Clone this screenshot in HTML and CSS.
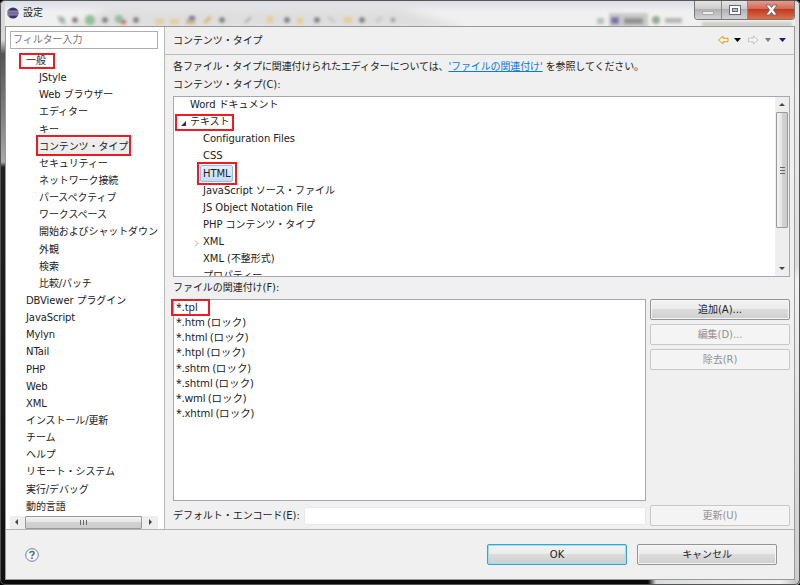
FILE: index.html
```html
<!DOCTYPE html>
<html lang="ja">
<head>
	<meta charset="UTF-8">
	<title>設定</title>
	<link rel="stylesheet" href="styles.css">
</head>
<body>
<div class="window">
	<div class="titlebar">
		<svg class="glass" width="800" height="26" viewBox="0 0 800 26">
			<defs>
				<filter id="soft" x="-50%" y="-50%" width="200%" height="200%"><feGaussianBlur stdDeviation="1.7"/></filter>
				<filter id="haze"><feGaussianBlur stdDeviation="4"/></filter>
			</defs>
			<path d="M60 30L110 8H400L470 30z" fill="#d4d4d4" opacity=".65" filter="url(#haze)"/>
			<g filter="url(#soft)">
				<g fill="#7b7b7b">
					<circle cx="75" cy="20" r="2.8"/><circle cx="105" cy="20" r="2.8"/><circle cx="136" cy="20" r="2.8"/><circle cx="222" cy="20" r="2.8"/>
					<circle cx="287" cy="20" r="2.8"/><circle cx="317" cy="20" r="2.8"/><circle cx="362" cy="20" r="2.8"/><circle cx="393" cy="20" r="2.4" opacity=".6"/>
				</g>
				<path d="M57 16l7 1 2 7-6-1z" fill="#a1b7ae"/>
				<circle cx="90" cy="20" r="5" fill="#8fc09a"/>
				<circle cx="119" cy="19" r="4" fill="#8fc09a"/><rect x="121" y="20" width="5" height="4" fill="#c36f6b"/>
				<path d="M155 19h9v5h-9zM170 19h9v5h-9z" fill="#e5cd9e"/>
				<path d="M186 19h9v5h-9z" fill="#c9b486"/><path d="M189 16h6v4h-6z" fill="#6e799c"/>
				<path d="M203 22l6-6 3 2-6 6z" fill="#dbb778"/>
				<path d="M245 23l6-6" stroke="#aaa" stroke-width="2"/>
				<path d="M267 16h6v7h-6zM297 18h6v6h-6zM344 17h8v6h-8z" fill="#e9ce96"/>
				<path d="M328 17l7 5M376 22l6-5" stroke="#c9c9c9" stroke-width="3"/>
				<rect x="609" y="13" width="39" height="14" fill="#c9c9c9"/>
				<rect x="597" y="18" width="7" height="6" fill="#b5c1c0"/>
				<rect x="611" y="17" width="8" height="7" fill="#7772a8"/>
				<path d="M624 18h19v6h-19z" fill="#929292"/>
				<circle cx="656" cy="20" r="4" fill="#8eab98"/>
				<path d="M665 18h17v5h-17z" fill="#b5b5b5"/>
				<path d="M702 22h90v5h-90z" fill="#d0ccc8"/>
			</g>
		</svg>
		<svg class="logo" width="12" height="12" viewBox="0 0 12 12">
			<circle cx="6" cy="6" r="5.6" fill="#3b326f"/>
			<path d="M.8 4.2h10.8M.5 6h11.3M.9 7.9h10.7" stroke="#c6c4e1" stroke-width=".8"/>
			<path d="M2.5 1.6A5.6 5.6 0 0 0 2.5 10.4" fill="none" stroke="#ba9a9e"/>
		</svg>
		<span class="caption">設定</span>
		<div class="controls">
			<div class="control min"><svg width="12" height="5"><rect x=".5" y=".5" width="11" height="3" fill="#eee" stroke="#aaa"/></svg></div>
			<div class="control max"><svg width="14" height="12"><rect x="1.5" y="1.5" width="11" height="9" fill="#fff" stroke="#666875"/><rect x="4.5" y="4.5" width="5" height="3" fill="#bbb" stroke="#666875"/></svg></div>
			<div class="control close"><svg width="13" height="12" viewBox="0 0 13 12"><path d="M1 1h3.5l2 2.5 2-2.5H12L8.5 6l3.5 5H8.5l-2-2.7L4.5 11H1l3.5-5z" fill="#fff" stroke="#665863" stroke-width=".8"/></svg></div>
		</div>
	</div>

	<div class="client">
		<div class="main">
			<div class="sidebar">
				<div class="filter">フィルター入力</div>
				<ul class="tree nav">
					<li>一般</li>
					<li class="sub">JStyle</li>
					<li class="sub">Web ブラウザー</li>
					<li class="sub">エディター</li>
					<li class="sub">キー</li>
					<li class="sub"><span class="current">コンテンツ・タイプ</span></li>
					<li class="sub">セキュリティー</li>
					<li class="sub">ネットワーク接続</li>
					<li class="sub">パースペクティブ</li>
					<li class="sub">ワークスペース</li>
					<li class="sub">開始およびシャットダウン</li>
					<li class="sub">外観</li>
					<li class="sub">検索</li>
					<li class="sub">比較/パッチ</li>
					<li>DBViewer プラグイン</li>
					<li>JavaScript</li>
					<li>Mylyn</li>
					<li>NTail</li>
					<li>PHP</li>
					<li>Web</li>
					<li>XML</li>
					<li>インストール/更新</li>
					<li>チーム</li>
					<li>ヘルプ</li>
					<li>リモート・システム</li>
					<li>実行/デバッグ</li>
					<li>動的言語</li>
				</ul>
				<div class="hscroll">
					<svg width="15" height="12"><path d="M8 3v6L5 6z" fill="#444"/></svg>
					<div class="hthumb"><i></i><i></i><i></i></div>
					<svg width="16" height="12"><path d="M7 3v6l3-3z" fill="#444"/></svg>
				</div>
			</div>

			<div class="page">
				<div class="heading">
					<h1>コンテンツ・タイプ</h1>
					<svg width="74" height="12" viewBox="0 0 74 12">
						<path d="M.5 5l4.5-4v2.2h5v3.600h-5V9z" fill="#fff5c9" stroke="#cf9a3c"/>
						<path d="M16 3h7l-3.500 4z" fill="#000"/>
						<path d="M40 5L35.500 1v2.200h-5v3.600h5V9z" fill="#f5f5f5" stroke="#c5c2be"/>
						<path d="M47 3h6l-3 4z" fill="#777"/>
						<path d="M61 3h7l-3.500 4z" fill="#28205c"/>
					</svg>
				</div>
				<div class="body">
					<p class="note">各ファイル・タイプに関連付けられたエディターについては、<a>'ファイルの関連付け'</a> を参照してください。</p>
					<p class="label">コンテンツ・タイプ(C):</p>
					<div class="types">
						<ul class="tree">
							<li>Word ドキュメント</li>
							<li><svg class="open" width="5" height="5"><path d="M5 0v5H0z" fill="#333"/></svg>テキスト</li>
							<li class="sub">Configuration Files</li>
							<li class="sub">CSS</li>
							<li class="sub"><span class="picked">HTML</span></li>
							<li class="sub">JavaScript ソース・ファイル</li>
							<li class="sub">JS Object Notation File</li>
							<li class="sub">PHP コンテンツ・タイプ</li>
							<li class="sub"><svg class="closed" width="5" height="7"><path d="M1 .5l3 3-3 3" fill="none" stroke="#aaa"/></svg>XML</li>
							<li class="sub">XML (不整形式)</li>
							<li class="sub">プロパティー</li>
						</ul>
						<div class="vscroll">
							<svg width="12" height="15"><path d="M3 9h6L6 6z" fill="#444"/></svg>
							<div class="vthumb"><i></i><i></i><i></i></div>
							<svg width="12" height="15"><path d="M3 6h6L6 9z" fill="#444"/></svg>
						</div>
					</div>
					<p class="label files-label">ファイルの関連付け(F):</p>
					<div class="assoc">
						<ul class="files">
							<li>*.tpl</li>
							<li>*.htm (ロック)</li>
							<li>*.html (ロック)</li>
							<li>*.htpl (ロック)</li>
							<li>*.shtm (ロック)</li>
							<li>*.shtml (ロック)</li>
							<li>*.wml (ロック)</li>
							<li>*.xhtml (ロック)</li>
						</ul>
						<div class="actions">
							<div class="btn">追加(A)...</div>
							<div class="btn off">編集(D)...</div>
							<div class="btn off">除去(R)</div>
						</div>
					</div>
					<div class="encoding">
						<span>デフォルト・エンコード(E):</span>
						<div class="field"></div>
						<div class="btn off">更新(U)</div>
					</div>
				</div>
			</div>
		</div>
		<div class="footer">
			<svg width="14" height="14" viewBox="0 0 14 14">
				<circle cx="7" cy="7" r="6.3" fill="#f5f7fa" stroke="#70809a"/>
				<path d="M4.8 5.3C5 2.8 9.3 2.9 9.1 5.3C9 6.7 7 6.7 7 8.3" fill="none" stroke="#536583" stroke-width="1.5"/>
				<rect x="6.2" y="9.4" width="1.6" height="1.6" fill="#536583"/>
			</svg>
			<div class="btn ok">OK</div>
			<div class="btn">キャンセル</div>
		</div>
	</div>

	<div class="mark mark-general"></div>
	<div class="mark mark-content"></div>
	<div class="mark mark-text"></div>
	<div class="mark mark-html"></div>
	<div class="mark mark-tpl"></div>
</div>
</body>
</html>
```

FILE: styles.css
```css
* {box-sizing: border-box;}
body {margin: 0; background: #000; font: 10px/17px "DejaVu Sans", "Noto Sans CJK JP", sans-serif; letter-spacing: -.05px; color: #222;}
ul, li, p, h1 {margin: 0; padding: 0; list-style: none; font-size: inherit; font-weight: normal;}
svg {display: block; flex: none;}

.window {position: relative; width: 800px; height: 585px; padding: 0 5px 5px; overflow: hidden; border-radius: 5px 5px 4px 4px;
	background:
		linear-gradient(#686868, #686868) 0 0 / 100% 1px no-repeat,
		linear-gradient(90deg, #0a0a0a 648px, #d9dcde 656px, #f0f0f0 780px, #bbb) 0 100% / 100% 5px no-repeat,
		linear-gradient(#d8d8d8 0, #d8d8d8 40px, #555 54px, #888 125px, #aaa 162px, #222 167px, #111 100%) 0 0 / 5px 100% no-repeat,
		linear-gradient(#ddd, #eee 90px, #ddd 265px, #f1f1f1 280px, #ccc) 100% 0 / 5px 100% no-repeat,
		linear-gradient(#d9dce8, #f0f0f0 12px);}
.window:after {content: ""; position: absolute; inset: 0; border: 1px solid #555; border-radius: 5px; pointer-events: none;}

.titlebar {display: flex; height: 26px;}
.glass {position: absolute; left: 0; top: 0;}
.logo {position: relative; margin: 7px 4px 0 2px;}
.caption {position: relative; padding-top: 4px;}
.controls {position: relative; display: flex; width: 101px; height: 20px; margin-left: auto; border: 1px solid #77777b; border-top: 0; border-radius: 0 0 4px 4px; overflow: hidden;}
.control {display: flex; align-items: center; justify-content: center; width: 27px; border-right: 1px solid #888; background: linear-gradient(#e8e8e9, #ccc 45%, #b0b0b2 50%, #d4d4d5);}
.control.min {padding-top: 7px;}
.control.close {width: 46px; border: 0; background: linear-gradient(#e8a294, #d46a55 45%, #c23a22 50%, #dd7047);}

.client {display: flex; flex-direction: column; height: 554px; border: 1px solid #999; background: #f0f0f0;}
.main {display: flex; height: 503px; border-bottom: 1px solid #b5b5b5;}
.sidebar {width: 159px; padding: 4px 6px 0 4px; border-right: 1px solid #bbb; background: #fff;}
.filter {height: 18px; width: 148px; padding-left: 2px; border: 1px solid #abadb3; line-height: 16px; color: #777;}
.tree li {position: relative; height: 17.15px; padding-left: 16px; white-space: nowrap;}
.tree .sub {padding-left: 29px;}
.nav {padding-top: 3px; height: 467px; letter-spacing: -.1px;}
.current {display: inline-block; height: 17px; margin-left: -3px; padding: 0 3px; background: #ededed;}
.picked {display: inline-block; height: 17px; width: 33px; margin-left: -3px; padding-left: 2px; border: 1px solid #99bce5; border-radius: 2px; background: linear-gradient(#e6f0fc, #c5dcf8); line-height: 15px;}
.open {position: absolute; left: 7px; top: 8px;}
.closed {position: absolute; left: 20px; top: 7px;}

.hscroll {display: flex; height: 13px; width: 148px; background: #eee;}
.hthumb {display: flex; justify-content: center; align-items: center; gap: 2px; flex: 1; height: 13px; border: 1px solid #999; border-radius: 1px; background: linear-gradient(#f4f4f4, #e6e6e6 45%, #d2d2d3 50%, #ccc);}
.hthumb i {width: 1px; height: 5px; background: #666;}
.vscroll {width: 14px; background: #eee; padding: 0 1px;}
.vthumb {display: flex; flex-direction: column; justify-content: center; align-items: center; gap: 2px; height: 116px; border: 1px solid #999; border-radius: 1px; background: linear-gradient(90deg, #f4f4f4, #e6e6e6 45%, #d2d2d3 50%, #ccc);}
.vthumb i {width: 5px; height: 1px; background: #666;}
.vthumb + svg {margin-top: 33px;}

.page {flex: 1;}
.heading {display: flex; justify-content: space-between; align-items: center; height: 28px; padding: 0 2px 0 8px; border-bottom: 1px solid #bbb;}
.body {padding: 2px 4px 0 8px;}
.note {height: 19px; line-height: 20px; letter-spacing: -.12px;}
.note a {color: #1477dc; text-decoration: underline;}
.label {height: 20px; line-height: 17px;}
.types {display: flex; justify-content: space-between; height: 181px; border: 1px solid #a5a8b0; background: #fff; overflow: hidden;}
.types .tree {margin-top: -1px;}
.files-label {height: 22px; line-height: 21px;}
.assoc {display: flex; gap: 4px; height: 202px;}
.files {flex: 1; border: 1px solid #a5a8b0; background: #fff; font-family: "Noto Sans", "Noto Sans CJK JP", sans-serif; font-size: 10.5px; letter-spacing: .03px;}
.files li {height: 15.15px; padding-left: 2px; line-height: 15px;}
.actions {display: flex; flex-direction: column; gap: 4px;}
.btn {width: 140px; height: 21px; border: 1px solid #949494; border-radius: 2px; background: linear-gradient(#f3f3f3, #ebebeb 48%, #dcdcdc 50%, #cecece); box-shadow: inset 0 0 0 1px #f6f6f6; text-align: center; line-height: 19px;}
.btn.off {border-color: #c5c7c7; background: #f4f4f4; color: #929292;}
.btn.ok {border-color: #3ba3cf; box-shadow: inset 0 0 0 1px #9eddf3;}
.encoding {display: flex; align-items: center; gap: 4px; margin-top: 4px;}
.field {flex: 1; height: 18px; border: 1px solid #e9e9ee; background: #fff;}
.footer {display: flex; align-items: center; gap: 10px; height: 49px; padding: 0 17px 0 19px;}
.footer .ok {margin-left: auto;}

/* red callouts over the tree items */
.mark {position: absolute; border: 2px solid #ed1c24;}
.mark-general {left: 19px; top: 53px; width: 36px; height: 16px;}
.mark-content {left: 36px; top: 135px; width: 95px; height: 21px;}
.mark-text {left: 175px; top: 114px; width: 59px; height: 17px;}
.mark-html {left: 197px; top: 162px; width: 40px; height: 23px;}
.mark-tpl {left: 171px; top: 299px; width: 39px; height: 17px;}
```
